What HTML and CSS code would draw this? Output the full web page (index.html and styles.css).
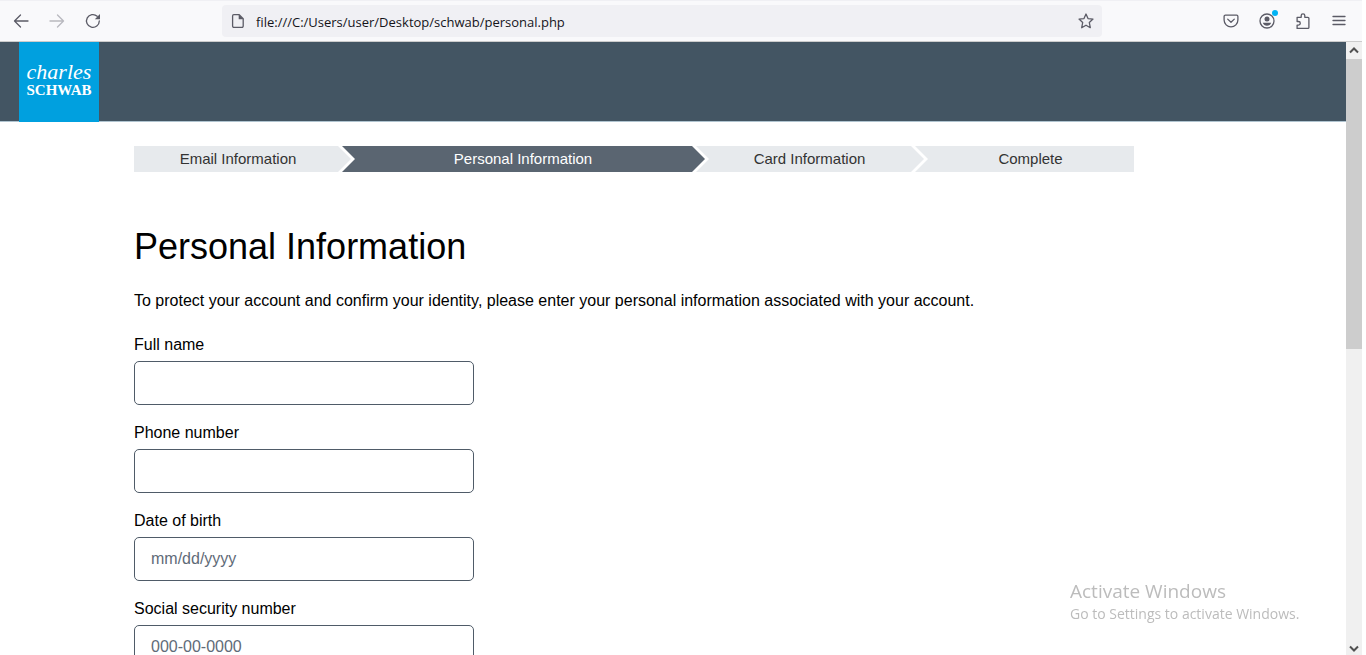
FILE: index.html
```
<!DOCTYPE html>
<html lang="en">
<head>
  <meta charset="UTF-8">
  <meta name="viewport" content="width=device-width, initial-scale=1.0">
  <title>Personal Information</title>
  <link rel="stylesheet" href="styles.css">
</head>
<body>

  <div class="toolbar">
    <div class="nav-buttons">
      <button type="button" aria-label="Back">
        <svg viewBox="0 0 16 16"><path d="M15 8H1.5M7.5 2L1.5 8l6 6"/></svg>
      </button>
      <button type="button" class="disabled" aria-label="Forward" disabled>
        <svg viewBox="0 0 16 16"><path d="M1 8h13.5M8.5 2l6 6-6 6"/></svg>
      </button>
      <button type="button" aria-label="Reload">
        <svg viewBox="0 0 16 16"><path d="M14.3 8A6.4 6.4 0 1 1 12.2 3.2"/><path class="solid" d="M15 1v5.2H9.8z"/></svg>
      </button>
    </div>

    <div class="address">
      <svg class="icon" viewBox="0 0 16 16"><path d="M3.8 1.7h5.4l4 4v7.4a1.2 1.2 0 0 1-1.2 1.2H3.8a1.2 1.2 0 0 1-1.2-1.2V2.9a1.2 1.2 0 0 1 1.2-1.2z"/><path class="solid" d="M8.7 1.4v4.9h4.9z"/></svg>
      <input type="text" aria-label="Address" value="file:///C:/Users/user/Desktop/schwab/personal.php" readonly>
      <button type="button" aria-label="Bookmark">
        <svg viewBox="0 0 16 16"><path d="M8 1l2 4.6 5 .5-3.7 3.4 1 5.2L8 12.2l-4.3 2.5 1-5.2L1 6.1l5-.5z"/></svg>
      </button>
    </div>

    <div class="tools">
      <button type="button" aria-label="Pocket">
        <svg viewBox="0 0 16 16"><path d="M2.4 2.2h11.2a1.3 1.3 0 0 1 1.3 1.3V7A6.9 6.9 0 0 1 1.1 7V3.5a1.3 1.3 0 0 1 1.3-1.3z"/><path d="M4.7 6.1L8 9.3l3.3-3.2"/></svg>
      </button>
      <button type="button" class="account" aria-label="Account">
        <svg viewBox="0 0 16 16"><circle cx="8" cy="8" r="7"/><circle class="solid" cx="8" cy="6" r="2.5"/><path class="solid" d="M3.8 9.8h8.4c-.6 1.8-2.2 3-4.2 3s-3.6-1.2-4.2-3z"/></svg>
        <span class="dot"></span>
      </button>
      <button type="button" aria-label="Extensions">
        <svg viewBox="0 0 16 16"><path d="M2.1 7V4.3h4.1V2.6a1.8 1.8 0 0 1 3.6 0v1.7h3.1a1 1 0 0 1 1 1v9.1a1 1 0 0 1-1 1H2.1v-3.3h1.4a1.8 1.8 0 0 0 0-3.6H2.1z"/></svg>
      </button>
      <button type="button" aria-label="Menu">
        <svg viewBox="0 0 16 16"><path d="M2 3.5h12M2 7.5h12M2 11.5h12"/></svg>
      </button>
    </div>
  </div>

  <div class="viewport">
    <div class="page">
      <header class="header">
        <a class="logo" href="#">
          <span class="logo-first">charles</span>
          <span class="logo-last">SCHWAB</span>
        </a>
      </header>

      <main class="content">
        <ol class="steps">
          <li>Email Information</li>
          <li class="active">Personal Information</li>
          <li>Card Information</li>
          <li>Complete</li>
        </ol>

        <h1>Personal Information</h1>
        <p>To protect your account and confirm your identity, please enter your personal information associated with your account.</p>

        <div class="field">
          <label for="full-name">Full name</label>
          <input type="text" id="full-name" autocomplete="off">
        </div>
        <div class="field">
          <label for="phone">Phone number</label>
          <input type="text" id="phone" autocomplete="off">
        </div>
        <div class="field">
          <label for="birth">Date of birth</label>
          <input type="text" id="birth" placeholder="mm/dd/yyyy" autocomplete="off">
        </div>
        <div class="field">
          <label for="ssn">Social security number</label>
          <input type="text" id="ssn" placeholder="000-00-0000" autocomplete="off">
        </div>
      </main>
    </div>

    <div class="scrollbar">
      <svg viewBox="0 0 16 17"><path d="M4 10.5l4-4 4 4"/></svg>
      <div class="track"><div class="thumb"></div></div>
      <svg viewBox="0 0 16 17"><path d="M4 8.5l4 4 4-4"/></svg>
    </div>
  </div>

  <div class="watermark">
    <div class="watermark-title">Activate Windows</div>
    <div>Go to Settings to activate Windows.</div>
  </div>

</body>
</html>
```
FILE: styles.css
```
* {
  box-sizing: border-box;
}

body {
  margin: 0;
  height: 100vh;
  padding-right: 4px;
  display: flex;
  flex-direction: column;
  overflow: hidden;
  background-color: #fff;
  color: #000;
  font-family: "Liberation Sans", Arial, sans-serif;
  font-size: 16px;
}

/* browser toolbar */
.toolbar {
  flex: none;
  height: 42px;
  display: flex;
  align-items: center;
  justify-content: space-between;
  padding: 0 15px 0 13px;
  background-color: #f9f9fb;
  border-top: 1px solid #f0f0f4;
  border-bottom: 1px solid #ccc;
}

.toolbar button {
  display: block;
  width: 16px;
  height: 16px;
  padding: 0;
  border: none;
  background: none;
}

.toolbar svg {
  display: block;
  width: 16px;
  height: 16px;
  fill: none;
  stroke: #5b5b66;
  stroke-width: 1.3;
  stroke-linejoin: round;
  stroke-linecap: round;
}

.toolbar .solid {
  fill: #5b5b66;
  stroke: none;
}

.toolbar .disabled {
  opacity: 0.4;
}

.nav-buttons,
.tools {
  display: flex;
  gap: 20px;
}

.address {
  width: 880px;
  height: 32px;
  display: flex;
  align-items: center;
  gap: 10px;
  padding: 0 8px;
  border-radius: 4px;
  background-color: #f0f0f4;
}

.address input {
  flex: 1;
  height: 32px;
  padding: 2px 0 0;
  border: none;
  outline: none;
  background: none;
  color: #15141a;
  font-family: "Open Sans", "Noto Sans", sans-serif;
  font-size: 13px;
}

.toolbar .account {
  position: relative;
}

.dot {
  position: absolute;
  top: -3px;
  right: -3px;
  width: 6px;
  height: 6px;
  border-radius: 50%;
  background-color: #00b3f4;
}

/* page */
.viewport {
  flex: 1;
  min-height: 0;
  display: flex;
}

.page {
  flex: 1;
  overflow: hidden;
}

.header {
  height: 80px;
  padding-left: 19px;
  background-color: #435563;
  border-bottom: 1px solid #b0c4d0;
}

.logo {
  width: 80px;
  height: 80px;
  display: flex;
  flex-direction: column;
  align-items: center;
  padding-top: 20px;
  background-color: #00a0df;
  color: #fff;
  font-family: "Liberation Serif", "Times New Roman", serif;
  text-decoration: none;
}

.logo-first {
  font-size: 22px;
  font-style: italic;
  line-height: 20px;
}

.logo-last {
  font-size: 15px;
  font-weight: bold;
  line-height: 16px;
}

.content {
  max-width: 1134px;
  padding: 24px 0 0 134px;
}

/* progress steps */
.steps {
  display: grid;
  grid-template-columns: 204fr 354fr 219fr 223fr;
  margin: 0 0 55px;
  padding: 0;
  list-style: none;
  font-size: 15px;
  line-height: 26px;
  text-align: center;
}

.steps li {
  position: relative;
  padding-left: 16px;
  background-color: #e7eaed;
  color: #333;
}

.steps li:first-child {
  padding-left: 4px;
}

.steps .active {
  background-color: #5a6571;
  color: #fff;
}

/* white edge first, then the arrow head in the step's own colour */
.steps li:not(:last-child)::before,
.steps li:not(:last-child)::after {
  content: "";
  position: absolute;
  top: 0;
  left: 100%;
  z-index: 1;
  height: 100%;
}

.steps li::before {
  width: 17px;
  background-color: #fff;
  clip-path: polygon(0 0, 4px 0, 100% 50%, 4px 100%, 0 100%);
}

.steps li::after {
  width: 13px;
  background-color: inherit;
  clip-path: polygon(0 0, 100% 50%, 0 100%);
}

h1 {
  margin: 0 0 24px;
  font-size: 36px;
  font-weight: normal;
  line-height: 40px;
}

p {
  margin: 0 0 24px;
  line-height: 20px;
}

.field {
  margin-bottom: 18px;
}

.field label {
  display: block;
  margin-bottom: 6px;
  line-height: 20px;
}

.field input {
  display: block;
  width: 340px;
  height: 44px;
  padding: 0 16px;
  border: 1px solid #4f5b68;
  border-radius: 5px;
  background-color: #fff;
  color: #000;
  font: inherit;
}

.field input::placeholder {
  color: #5f6b78;
  opacity: 1;
}

/* scrollbar */
.scrollbar {
  width: 16px;
  display: flex;
  flex-direction: column;
  background-color: #f0f0f0;
}

.scrollbar svg {
  flex: none;
  width: 16px;
  height: 17px;
  fill: none;
  stroke: #505050;
  stroke-width: 2;
}

.track {
  flex: 1;
}

.thumb {
  height: 50%;
  background-color: #cdcdcd;
}

.watermark {
  position: fixed;
  right: 60px;
  bottom: 30px;
  width: 236px;
  color: #bcbcbc;
  font-family: "Open Sans", "Noto Sans", sans-serif;
  font-size: 14px;
  line-height: 22px;
  white-space: nowrap;
}

.watermark-title {
  font-size: 19px;
  line-height: 24px;
}
```
